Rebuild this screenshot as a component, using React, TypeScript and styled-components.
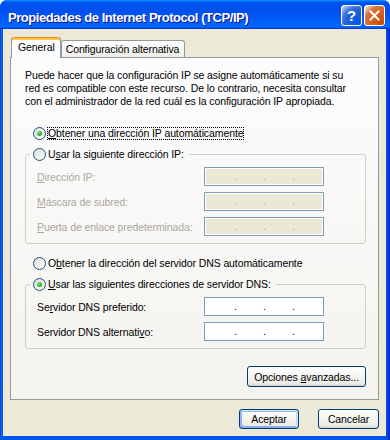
import React from 'react';
import styled, { createGlobalStyle } from 'styled-components';

const GlobalStyle = createGlobalStyle`
  html, body {
    margin: 0;
    padding: 0;
    background: #ffffff;
  }
  body {
    font-family: 'Liberation Sans', Arial, sans-serif;
  }
`;

const Frame = styled.div`
  width: 390px;
  height: 440px;
  box-sizing: border-box;
  display: flex;
  flex-direction: column;
  background: linear-gradient(90deg, #0831d9 0px, #166aee 1px, #0055ea 3px, #0055ea 385px, #0746d0 388px, #0019cf 390px);
  border-radius: 7px 7px 0 0;
  overflow: hidden;
`;

const TitleBar = styled.div`
  height: 29px;
  flex: none;
  display: flex;
  align-items: flex-start;
  padding: 0 5px 0 8px;
  background: linear-gradient(180deg, #0997ff, #0053ee 8%, #0050ee 40%, #06f 88%, #06f 93%, #005bff 95%, #003dd7 96%, #003dd7);
`;

const Title = styled.div`
  flex: 1;
  margin-top: 10px;
  line-height: 15px;
  font-size: 13px;
  font-weight: bold;
  letter-spacing: -0.45px;
  color: #ffffff;
  text-shadow: 1px 1px #0f1089;
  white-space: nowrap;
`;

const Controls = styled.div`
  display: flex;
  gap: 2px;
  margin-top: 5px;
`;

const CaptionButton = styled.div<{ $kind: 'help' | 'close' }>`
  width: 21px;
  height: 21px;
  box-sizing: border-box;
  border: 1px solid #ffffff;
  border-radius: 3px;
  display: flex;
  align-items: center;
  justify-content: center;
  color: #ffffff;
  font-size: 15px;
  font-weight: bold;
  background: ${(p) =>
    p.$kind === 'close'
      ? 'radial-gradient(circle at 90% 90%, #cc4600 0%, #dc6527 55%, #cd7546 70%, #ffccb2 90%, #ffffff 100%)'
      : 'radial-gradient(circle at 90% 90%, #0054e9 0%, #2263d5 55%, #4479e4 70%, #a3bbec 90%, #ffffff 100%)'};
`;

const Body = styled.div`
  flex: 1;
  margin: 0 4px 4px 3px;
  padding: 8px 7px 0 7px;
  background: #ece9d8;
  display: flex;
  flex-direction: column;
  font-size: 10.5px;
  letter-spacing: -0.1px;
  color: #000000;
`;

const TabRow = styled.div`
  height: 20px;
  display: flex;
  align-items: flex-end;
  padding-left: 1px;
`;

const Tab = styled.div<{ $active?: boolean }>`
  box-sizing: border-box;
  display: flex;
  align-items: center;
  border: 1px solid #919b9c;
  border-bottom: 0;
  border-radius: 3px 3px 0 0;
  white-space: nowrap;
  ${(p) =>
    p.$active
      ? `
    position: relative;
    z-index: 1;
    height: 21px;
    margin-bottom: -1px;
    padding: 0 5px 2px 6px;
    background: #fcfcfe;
    border-top-color: #e68b2c;
    box-shadow: inset 0 2px #ffc83c;
  `
      : `
    height: 17px;
    padding: 0 5px 0 4px;
    background: linear-gradient(180deg, #ffffff, #fafaf9 26%, #f0f0ea 95%, #ecebe5);
  `}
`;

const Panel = styled.div`
  height: 343px;
  flex: none;
  box-sizing: border-box;
  border: 1px solid #919b9c;
  background: linear-gradient(180deg, #fcfcfe, #f4f3ee);
  padding: 11px 12px 0 14px;
  display: flex;
  flex-direction: column;
`;

const Intro = styled.p`
  margin: 0;
  line-height: 13px;
  white-space: nowrap;
`;

const RadioRow = styled.div<{ $gap?: number; $indent?: number }>`
  height: 15px;
  display: flex;
  align-items: center;
  gap: 1px;
  margin-top: ${(p) => p.$gap ?? 0}px;
  padding-left: ${(p) => p.$indent ?? 0}px;
`;

const Radio = styled.span<{ $checked?: boolean }>`
  width: 13px;
  height: 13px;
  flex: none;
  box-sizing: border-box;
  border: 1px solid #1c5180;
  border-radius: 50%;
  background: linear-gradient(135deg, #dcdcd7, #ffffff);
  display: flex;
  align-items: center;
  justify-content: center;
  &::after {
    content: '';
    width: 5px;
    height: 5px;
    border-radius: 50%;
    display: ${(p) => (p.$checked ? 'block' : 'none')};
    background: radial-gradient(circle at 35% 35%, #7ee87a 0%, #2fb12c 55%, #1e8f1e 100%);
  }
`;

const RadioLabel = styled.span<{ $focused?: boolean }>`
  line-height: 11px;
  border: 1px ${(p) => (p.$focused ? 'dotted #000000' : 'solid transparent')};
  white-space: nowrap;
`;

const Key = styled.span`
  text-decoration: underline;
`;

const Group = styled.fieldset<{ $gap?: number }>`
  margin: ${(p) => p.$gap ?? 0}px 0 0 0;
  padding: 0;
  border: 1px solid #d0d0bf;
  border-radius: 3px;
  min-width: 0;
`;

const Legend = styled.legend`
  margin-left: 4px;
  padding: 0 4px 0 3px;
`;

const GroupBody = styled.div`
  padding: 5px 0 7px 11px;
  display: flex;
  flex-direction: column;
  gap: 6px;
`;

const FieldRow = styled.div`
  height: 19px;
  display: flex;
  align-items: center;
`;

const FieldLabel = styled.span<{ $disabled?: boolean }>`
  width: 167px;
  flex: none;
  color: ${(p) => (p.$disabled ? '#aca899' : '#000000')};
  white-space: nowrap;
`;

const IpBox = styled.div<{ $disabled?: boolean }>`
  width: 120px;
  height: 19px;
  box-sizing: border-box;
  border: 1px solid #7f9db9;
  box-shadow: inset 0 0 0 1px #ffffff;
  background: ${(p) => (p.$disabled ? '#ebe8d6' : '#ffffff')};
  color: ${(p) => (p.$disabled ? '#aca899' : '#000000')};
  display: flex;
  align-items: center;
  padding-left: 3px;
  line-height: 17px;
`;

const Octet = styled.span`
  width: 26px;
`;

const Dot = styled.span`
  width: 3px;
  text-align: center;
`;

const Button = styled.button<{ $default?: boolean; $w: number; $h?: number }>`
  width: ${(p) => p.$w}px;
  height: ${(p) => p.$h ?? 20}px;
  box-sizing: border-box;
  padding: 0;
  font-family: 'Liberation Sans', Arial, sans-serif;
  font-size: 10.5px;
  letter-spacing: -0.1px;
  color: #000000;
  border: 1px solid #003c74;
  border-radius: 3px;
  background: linear-gradient(180deg, #ffffff, #ecebe6 86%, #d6d0c5);
  box-shadow: ${(p) =>
    p.$default
      ? 'inset -1px 1px #cee7ff, inset 1px 2px #98b8ea, inset -2px 2px #bcd4f6, inset 1px -1px #89ade4, inset 2px -2px #89ade4'
      : 'none'};
`;

const PanelActions = styled.div`
  margin-top: 17px;
  display: flex;
  justify-content: flex-end;
`;

const DialogActions = styled.div`
  margin-top: 9px;
  display: flex;
  justify-content: flex-end;
  gap: 19px;
`;

const IpField = ({ disabled }: { disabled?: boolean }) => (
  <IpBox $disabled={disabled}>
    <Octet />
    <Dot>.</Dot>
    <Octet />
    <Dot>.</Dot>
    <Octet />
    <Dot>.</Dot>
    <Octet />
  </IpBox>
);

const App = () => (
  <>
    <GlobalStyle />
    <Frame>
      <TitleBar>
        <Title>Propiedades de Internet Protocol (TCP/IP)</Title>
        <Controls>
          <CaptionButton $kind="help">?</CaptionButton>
          <CaptionButton $kind="close">
            <svg width="11" height="11" viewBox="0 0 11 11">
              <path d="M1.5 1.5 L9.5 9.5 M9.5 1.5 L1.5 9.5" stroke="#ffffff" strokeWidth="2" strokeLinecap="square" />
            </svg>
          </CaptionButton>
        </Controls>
      </TitleBar>
      <Body>
        <TabRow>
          <Tab $active>General</Tab>
          <Tab>Configuración alternativa</Tab>
        </TabRow>
        <Panel>
          <Intro>
            Puede hacer que la configuración IP se asigne automáticamente si su
            <br />
            red es compatible con este recurso. De lo contrario, necesita consultar
            <br />
            con el administrador de la red cuál es la configuración IP apropiada.
          </Intro>

          <RadioRow $gap={18} $indent={8}>
            <Radio $checked />
            <RadioLabel $focused>
              <Key>O</Key>btener una dirección IP automáticamente
            </RadioLabel>
          </RadioRow>

          <Group $gap={6}>
            <Legend>
              <RadioRow>
                <Radio />
                <RadioLabel>
                  U<Key>s</Key>ar la siguiente dirección IP:
                </RadioLabel>
              </RadioRow>
            </Legend>
            <GroupBody>
              <FieldRow>
                <FieldLabel $disabled>
                  <Key>D</Key>irección IP:
                </FieldLabel>
                <IpField disabled />
              </FieldRow>
              <FieldRow>
                <FieldLabel $disabled>
                  <Key>M</Key>áscara de subred:
                </FieldLabel>
                <IpField disabled />
              </FieldRow>
              <FieldRow>
                <FieldLabel $disabled>
                  <Key>P</Key>uerta de enlace predeterminada:
                </FieldLabel>
                <IpField disabled />
              </FieldRow>
            </GroupBody>
          </Group>

          <RadioRow $gap={12} $indent={8}>
            <Radio />
            <RadioLabel>
              O<Key>b</Key>tener la dirección del servidor DNS automáticamente
            </RadioLabel>
          </RadioRow>

          <Group $gap={6}>
            <Legend>
              <RadioRow>
                <Radio $checked />
                <RadioLabel>
                  <Key>U</Key>sar las siguientes direcciones de servidor DNS:
                </RadioLabel>
              </RadioRow>
            </Legend>
            <GroupBody>
              <FieldRow>
                <FieldLabel>
                  Se<Key>r</Key>vidor DNS preferido:
                </FieldLabel>
                <IpField />
              </FieldRow>
              <FieldRow>
                <FieldLabel>
                  Servidor DNS alternati<Key>v</Key>o:
                </FieldLabel>
                <IpField />
              </FieldRow>
            </GroupBody>
          </Group>

          <PanelActions>
            <Button $w={119} $h={21}>
              Opciones <Key>a</Key>vanzadas...
            </Button>
          </PanelActions>
        </Panel>
        <DialogActions>
          <Button $default $w={60}>Aceptar</Button>
          <Button $w={61}>Cancelar</Button>
        </DialogActions>
      </Body>
    </Frame>
  </>
);

export default App;
